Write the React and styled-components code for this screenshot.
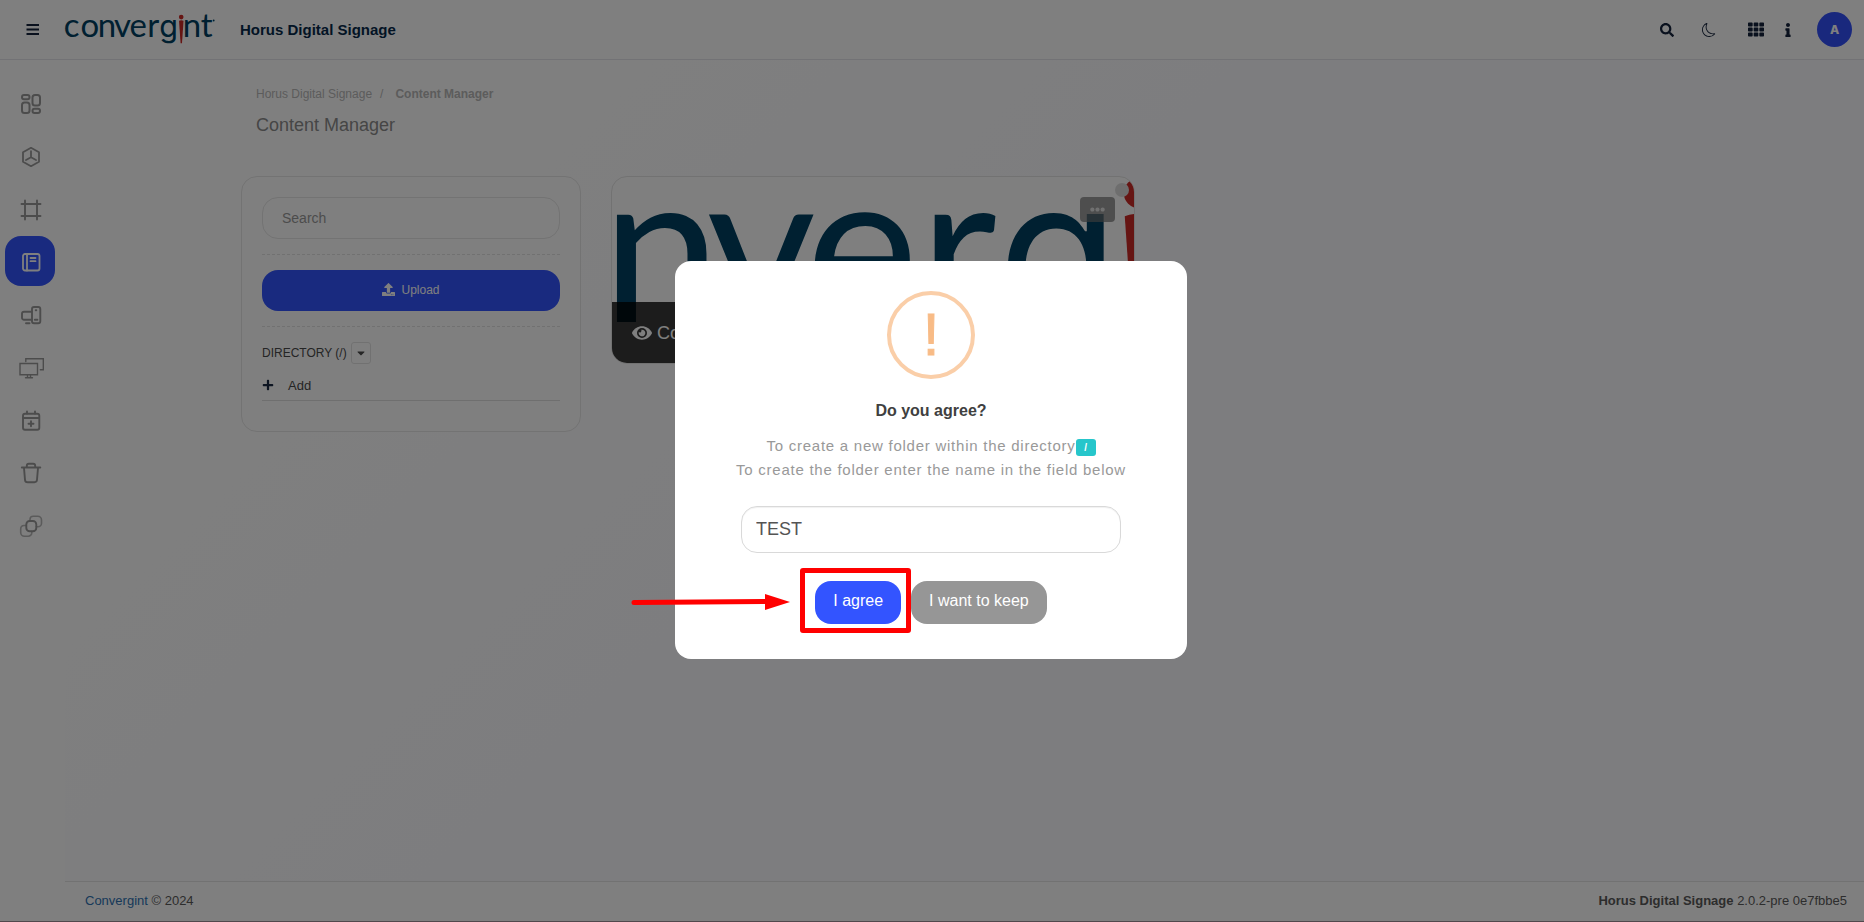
import React from "react";
import styled, { createGlobalStyle } from "styled-components";
import { FaSearch, FaTh, FaInfo, FaUpload, FaEye, FaPlus, FaCaretDown, FaEllipsisH } from "react-icons/fa";
import { BsMoon } from "react-icons/bs";

const GlobalStyle = createGlobalStyle`
  *, *::before, *::after { box-sizing: border-box; }
  body {
    margin: 0;
    background: #fff;
    color: #5a5a5a;
    font: 13px/20px "Liberation Sans", Arial, sans-serif;
  }
  button, input { font-family: inherit; }
  button { cursor: pointer; }
  a { color: inherit; text-decoration: none; }
`;

const Page = styled.div`
  display: flex;
  flex-direction: column;
  min-height: 100vh;
  border-bottom: 1px solid #a09098;
`;

const Header = styled.header`
  display: flex;
  align-items: center;
  height: 60px;
  padding: 0 12px 0 26px;
  border-bottom: 1px solid #e4e4ea;
  color: #14233c;
`;

const IconButton = styled.button`
  display: flex;
  align-items: center;
  justify-content: center;
  width: ${(p) => p.$width || 14}px;
  height: 24px;
  margin-left: ${(p) => p.$gap || 0}px;
  padding: 0;
  border: 0;
  background: none;
  color: inherit;
  font-size: ${(p) => p.$size || 14}px;
`;

const LogoLink = styled.a`
  display: flex;
  margin-left: 25px;

  svg { overflow: visible; }
`;

const AppName = styled.span`
  margin-left: 25px;
  color: #06294a;
  font-size: 15px;
  font-weight: 700;
`;

const HeaderTools = styled.div`
  display: flex;
  align-items: center;
  margin-left: auto;
`;

const Avatar = styled.button`
  width: 35px;
  height: 35px;
  margin-left: 22px;
  padding: 0;
  border: 0;
  border-radius: 50%;
  background: #3350fb;
  color: #fff;
  font: 800 12px/35px Inter, sans-serif;
`;

const Body = styled.div`
  display: flex;
  flex: 1;
`;

const SideNav = styled.nav`
  display: flex;
  flex-direction: column;
  justify-content: space-between;
  width: 65px;
  height: 472px;
  margin-top: 18px;
  padding-left: 5px;
`;

const NavLink = styled.a`
  display: flex;
  align-items: center;
  justify-content: center;
  width: 50px;
  height: 50px;
  padding: 2px 0 0 2px;
  border-radius: 16px;
  background: ${(p) => (p.$active ? "#3354ff" : "transparent")};
  color: ${(p) => (p.$active ? "#fff" : "#999")};

  svg { overflow: visible; }
`;

const Column = styled.div`
  display: flex;
  flex: 1;
  flex-direction: column;
  min-width: 0;
`;

const Main = styled.main`
  flex: 1;
  padding: 24px 176px;
  background: linear-gradient(135deg, #fff 15%, #fbfbff 45%);
`;

const Breadcrumb = styled.nav`
  display: flex;
  padding-left: 15px;
  color: #b8b8b8;
  font-size: 12px;
`;

const Crumb = styled.a`
  font-weight: ${(p) => (p.$current ? 700 : 400)};
`;

const Slash = styled.span`
  margin: 0 12px 0 8px;
`;

const PageTitle = styled.h1`
  margin: 9px 0 39px;
  padding-left: 15px;
  color: #8c8c8c;
  font-size: 18px;
  font-weight: 400;
  line-height: 24px;
`;

const ContentGrid = styled.div`
  display: grid;
  grid-template-columns: 340px 1fr;
  align-items: start;
  gap: 30px;
`;

const Panel = styled.section`
  padding: 20px 20px 30px;
  border: 1px solid #e6e6e6;
  border-radius: 16px;
  background: #fff;
`;

const SearchInput = styled.input`
  display: block;
  width: 100%;
  height: 42px;
  padding: 0 19px;
  border: 1px solid #e6e6e6;
  border-radius: 16px;
  background: #fff;
  font-size: 14px;

  &::placeholder { color: #999; opacity: 1; }
`;

const Divider = styled.hr`
  margin: 15px 0;
  border: 0;
  border-top: 1px dashed #e2e2e2;
`;

const UploadButton = styled.button`
  display: flex;
  align-items: center;
  justify-content: center;
  gap: 6px;
  width: 100%;
  height: 41px;
  padding: 0 0 2px;
  border: 0;
  border-radius: 16px;
  background: #3354ff;
  color: #fff;
  font-size: 12px;
`;

const DirectoryRow = styled.div`
  display: flex;
  align-items: center;
  gap: 4px;
  color: #4a4a4a;
  font-size: 12px;
`;

const CaretButton = styled.button`
  display: flex;
  align-items: center;
  justify-content: center;
  width: 20px;
  height: 22px;
  padding: 0;
  border: 1px solid #e2e2e2;
  border-radius: 3px;
  background: none;
  color: #4a4a4a;
  font-size: 12px;
`;

const AddButton = styled.button`
  display: flex;
  align-items: center;
  gap: 14px;
  width: 100%;
  height: 37px;
  padding: 6px 0 0;
  border: 0;
  border-bottom: 1px solid #dedede;
  background: none;
  color: #4a4a4a;
  font-size: 13px;

  svg { color: #1b2a44; font-size: 12px; }
`;

const Tiles = styled.div`
  display: grid;
  grid-template-columns: repeat(2, 1fr);
  gap: 30px;
`;

const Tile = styled.article`
  position: relative;
  display: flex;
  flex-direction: column;
  justify-content: flex-end;
  height: 188px;
  overflow: hidden;
  border: 1px solid #e4e4e4;
  border-radius: 16px;
  background: #fff;
`;

const Cover = styled.svg`
  position: absolute;
  inset: 0;
  width: 100%;
  height: 100%;
`;

const TileMenu = styled.button`
  position: absolute;
  top: 20px;
  right: 19px;
  display: flex;
  align-items: center;
  justify-content: center;
  width: 35px;
  height: 25px;
  padding: 0;
  border: 0;
  border-radius: 4px;
  background: rgba(116, 116, 116, 0.7);
  color: #e0e0e0;
  font-size: 15px;
`;

const StatusDot = styled.span`
  position: absolute;
  top: 6px;
  right: 5px;
  width: 14px;
  height: 14px;
  border-radius: 50%;
  background: #ddd;
`;

const TileCaption = styled.div`
  position: relative;
  display: flex;
  align-items: center;
  gap: 5px;
  height: 61px;
  padding: 0 20px;
  background: rgba(0, 0, 0, 0.78);
  color: #fff;
  font-size: 18px;

  svg { font-size: 20px; }
`;

const Footer = styled.footer`
  display: flex;
  align-items: center;
  justify-content: space-between;
  height: 40px;
  padding: 0 17px 2px 20px;
  border-top: 1px solid #e4e4e4;

  a { color: #2f73b3; }
`;

const Backdrop = styled.div`
  position: fixed;
  inset: 0;
  display: flex;
  align-items: center;
  justify-content: center;
  padding: 0 2px 2px 0;
  background: rgba(0, 0, 0, 0.5);
`;

const Dialog = styled.form`
  display: flex;
  flex-direction: column;
  align-items: center;
  width: 512px;
  padding: 30px 30px 35px;
  border-radius: 16px;
  background: #fff;
`;

const WarningMark = styled.div`
  width: 88px;
  height: 88px;
  border: 4px solid #facea8;
  border-radius: 50%;
  color: #f8bb86;
  font-size: 60px;
  line-height: 80px;
  text-align: center;
  -webkit-text-stroke: 1px #f8bb86;
`;

const DialogTitle = styled.h2`
  margin: 20px 0 11px;
  color: #404040;
  font-size: 16px;
  line-height: 24px;
`;

const DialogText = styled.label`
  color: #999;
  font-size: 15px;
  letter-spacing: 0.05em;
  line-height: 24px;
  text-align: center;
`;

const PathBadge = styled.span`
  display: inline-block;
  width: 20px;
  border-radius: 3px;
  background: #26c6cb;
  color: #fff;
  font-size: 10px;
  font-weight: 700;
  letter-spacing: normal;
  line-height: 17px;
`;

const NameInput = styled.input`
  width: 380px;
  height: 47px;
  margin: 24px 0 28px;
  padding: 0 14px;
  border: 1px solid #d9d9d9;
  border-radius: 16px;
  box-shadow: inset 0 1px 1px rgba(0, 0, 0, 0.06);
  background: #fff;
  color: #545454;
  font-size: 18px;
`;

const DialogActions = styled.div`
  display: flex;
  gap: 10px;
`;

const Marked = styled.div`
  position: relative;
`;

const MarkFrame = styled.span`
  position: absolute;
  z-index: 1;
  inset: -13px -10px -9px -15px;
  border: 5px solid #f00;
  border-radius: 3px;
  pointer-events: none;
`;

const MarkArrow = styled.svg`
  position: absolute;
  top: 13px;
  right: 111px;
`;

const DialogButton = styled.button`
  height: 43px;
  padding: 0 18px 3px;
  border: 0;
  border-radius: 16px;
  background: ${(p) => (p.$primary ? "#3354ff" : "#969696")};
  color: #fff;
  font-size: 16px;
`;

const brandLetters = [
  ["c", -232],
  ["o", -126],
  ["n", -14],
  ["v", 90],
  ["e", 189],
  ["r", 302],
  ["g", 380],
  ["n", 530],
  ["t", 646],
];

function Wordmark({ first = 0, last = brandLetters.length }) {
  return (
    <g fill="#004062">
      {brandLetters.slice(first, last).map(([letter, x]) => (
        <text
          key={x}
          x={x}
          fontFamily={letter === "g" ? "Inter, sans-serif" : "Lato, sans-serif"}
          fontSize={letter === "g" ? 196 : 211}
        >
          {letter}
        </text>
      ))}
      <circle cx="520" cy="-128" r="15" fill="#cc2a27" />
      <path d="M506 -105 Q520 -110 535 -105 L525 40 H516 Z" fill="#cc2a27" />
      {last === brandLetters.length && <circle cx="728" cy="-106" r="6" />}
    </g>
  );
}

const stroke = { fill: "none", stroke: "currentColor", strokeLinecap: "round", strokeLinejoin: "round" };

const navItems = [
  {
    label: "Dashboard",
    art: (
      <g strokeWidth="2">
        <rect x="3" y="3" width="7.500" height="4.200" rx="2" />
        <rect x="3" y="10.500" width="7.500" height="10.500" rx="2.500" />
        <rect x="13.500" y="3" width="7.500" height="10.500" rx="2.500" />
        <rect x="13.500" y="16.800" width="7.500" height="4.200" rx="2" />
      </g>
    ),
  },
  { label: "Modules", art: <path strokeWidth="1.800" d="M12 2.800l8 4.400v9.600l-8 4.400-8-4.400V7.200zM12 6.200v6l-5 2.800M12 12.200l5 2.800" /> },
  { label: "Layouts", art: <path strokeWidth="1.900" d="M6 2.500v19M18 2.500v19M2.500 6h19M2.500 18h19" /> },
  {
    label: "Content Manager",
    active: true,
    art: (
      <g strokeWidth="1.800">
        <rect x="4" y="4" width="16.500" height="16.500" rx="2" />
        <path d="M8 4v16.500M11.500 8h5M11.500 11.200h5" />
      </g>
    ),
  },
  {
    label: "Devices",
    art: (
      <g strokeWidth="1.900">
        <rect x="13" y="4" width="8.300" height="16.200" rx="2" />
        <path d="M12.500 8.700H5a2 2 0 0 0-2 2v4a2 2 0 0 0 2 2h7.500M7 20.200h3.500M16.700 7.200h0.600M15.800 16.800h2.600" />
      </g>
    ),
  },
  { label: "Screens", art: <path strokeWidth="1.400" strokeLinejoin="miter" d="M1 7.500h17.500v11.300H1zM6.500 21.700h7M8.500 19v2.500M11.500 19v2.500M6.800 5.500V2.800h17.500v11h-3" /> },
  {
    label: "Schedule",
    art: (
      <g strokeWidth="1.900">
        <rect x="4" y="4.700" width="16.300" height="16" rx="2" />
        <path d="M4 9h16M8 2.500v2M16 2.500v2M12 12.200v5M9.500 14.700h5" />
      </g>
    ),
  },
  { label: "Trash", art: <path strokeWidth="1.900" d="M2.800 6.500h18.500M7.800 6V4.800a2 2 0 0 1 2-2h4.400a2 2 0 0 1 2 2V6M5 7l1 11.800a2.600 2.600 0 0 0 2.600 2.400h6.800a2.600 2.600 0 0 0 2.600-2.400L19 7" /> },
  {
    label: "Integrations",
    art: (
      <g>
        <rect x="7.300" y="7" width="10" height="10.300" rx="3.400" strokeWidth="1.900" />
        <g strokeWidth="1.600" opacity="0.7">
          <path d="M11 7V5.500A3.200 3.200 0 0 1 14.200 2.300h4.600A3.700 3.700 0 0 1 22.500 6v3.200A3.500 3.500 0 0 1 19 12.700h-1.700" />
          <path d="M7 11.500H5A3.500 3.500 0 0 0 1.700 15v3.500A3.700 3.700 0 0 0 5.400 22.200h3.900A3.500 3.500 0 0 0 12.800 18.700v-1.200" />
        </g>
      </g>
    ),
  },
];

export default function App() {
  return (
    <>
      <GlobalStyle />
      <Page>
        <Header>
          <IconButton aria-label="Toggle menu">
            <svg width="14" height="14" viewBox="0 0 14 14" stroke="currentColor" strokeWidth="2">
              <path d="M0.500 2h12.500M0.500 6.500h12.500M0.500 11h12.500" />
            </svg>
          </IconButton>
          <LogoLink href="#home" aria-label="Convergint home">
            <svg width="150" height="32" viewBox="-224 -148 960 205">
              <Wordmark />
            </svg>
          </LogoLink>
          <AppName>Horus Digital Signage</AppName>
          <HeaderTools>
            <IconButton aria-label="Search"><FaSearch /></IconButton>
            <IconButton aria-label="Dark mode" $gap={28}><BsMoon /></IconButton>
            <IconButton aria-label="Applications" $gap={32} $width={16} $size={17}><FaTh /></IconButton>
            <IconButton aria-label="Information" $gap={17}><FaInfo /></IconButton>
            <Avatar aria-label="Account">A</Avatar>
          </HeaderTools>
        </Header>
        <Body>
          <SideNav aria-label="Sections">
            {navItems.map((item) => (
              <NavLink key={item.label} href="#section" aria-label={item.label} $active={item.active}>
                <svg width="24" height="24" viewBox="0 0 24 24" {...stroke}>{item.art}</svg>
              </NavLink>
            ))}
          </SideNav>
          <Column>
            <Main>
              <Breadcrumb aria-label="Breadcrumb">
                <Crumb href="#home">Horus Digital Signage</Crumb>
                <Slash>/</Slash>
                <Crumb href="#content" $current>Content Manager</Crumb>
              </Breadcrumb>
              <PageTitle>Content Manager</PageTitle>
              <ContentGrid>
                <Panel>
                  <SearchInput type="search" placeholder="Search" aria-label="Search" />
                  <Divider />
                  <UploadButton><FaUpload size={13} />Upload</UploadButton>
                  <Divider />
                  <DirectoryRow>
                    DIRECTORY (/)
                    <CaretButton aria-label="Directory options"><FaCaretDown /></CaretButton>
                  </DirectoryRow>
                  <AddButton><FaPlus />Add</AddButton>
                </Panel>
                <Tiles>
                  <Tile>
                    <Cover viewBox="-4 -144 521 185" preserveAspectRatio="xMinYMin slice" aria-hidden="true">
                      <Wordmark first={2} last={7} />
                    </Cover>
                    <TileMenu aria-label="File options"><FaEllipsisH /></TileMenu>
                    <StatusDot />
                    <TileCaption><FaEye />Convergint</TileCaption>
                  </Tile>
                </Tiles>
              </ContentGrid>
            </Main>
            <Footer>
              <span><a href="#convergint">Convergint</a> © 2024</span>
              <span><b>Horus Digital Signage</b> 2.0.2-pre 0e7fbbe5</span>
            </Footer>
          </Column>
        </Body>
      </Page>
      <Backdrop>
        <Dialog role="dialog" aria-labelledby="dialog-title" onSubmit={(e) => e.preventDefault()}>
          <WarningMark aria-hidden="true">!</WarningMark>
          <DialogTitle id="dialog-title">Do you agree?</DialogTitle>
          <DialogText htmlFor="folder-name">
            To create a new folder within the directory<PathBadge>/</PathBadge>
            <br />
            To create the folder enter the name in the field below
          </DialogText>
          <NameInput id="folder-name" type="text" defaultValue="TEST" />
          <DialogActions>
            <Marked>
              <DialogButton type="submit" $primary>I agree</DialogButton>
              <MarkFrame />
              <MarkArrow width="159" height="16" viewBox="0 0 159 16" fill="#f00" aria-hidden="true">
                <path d="M3 6L134 5V0L159 8L134 16V10L3 11A2.500 2.500 0 0 1 3 6Z" />
              </MarkArrow>
            </Marked>
            <DialogButton type="button">I want to keep</DialogButton>
          </DialogActions>
        </Dialog>
      </Backdrop>
    </>
  );
}
